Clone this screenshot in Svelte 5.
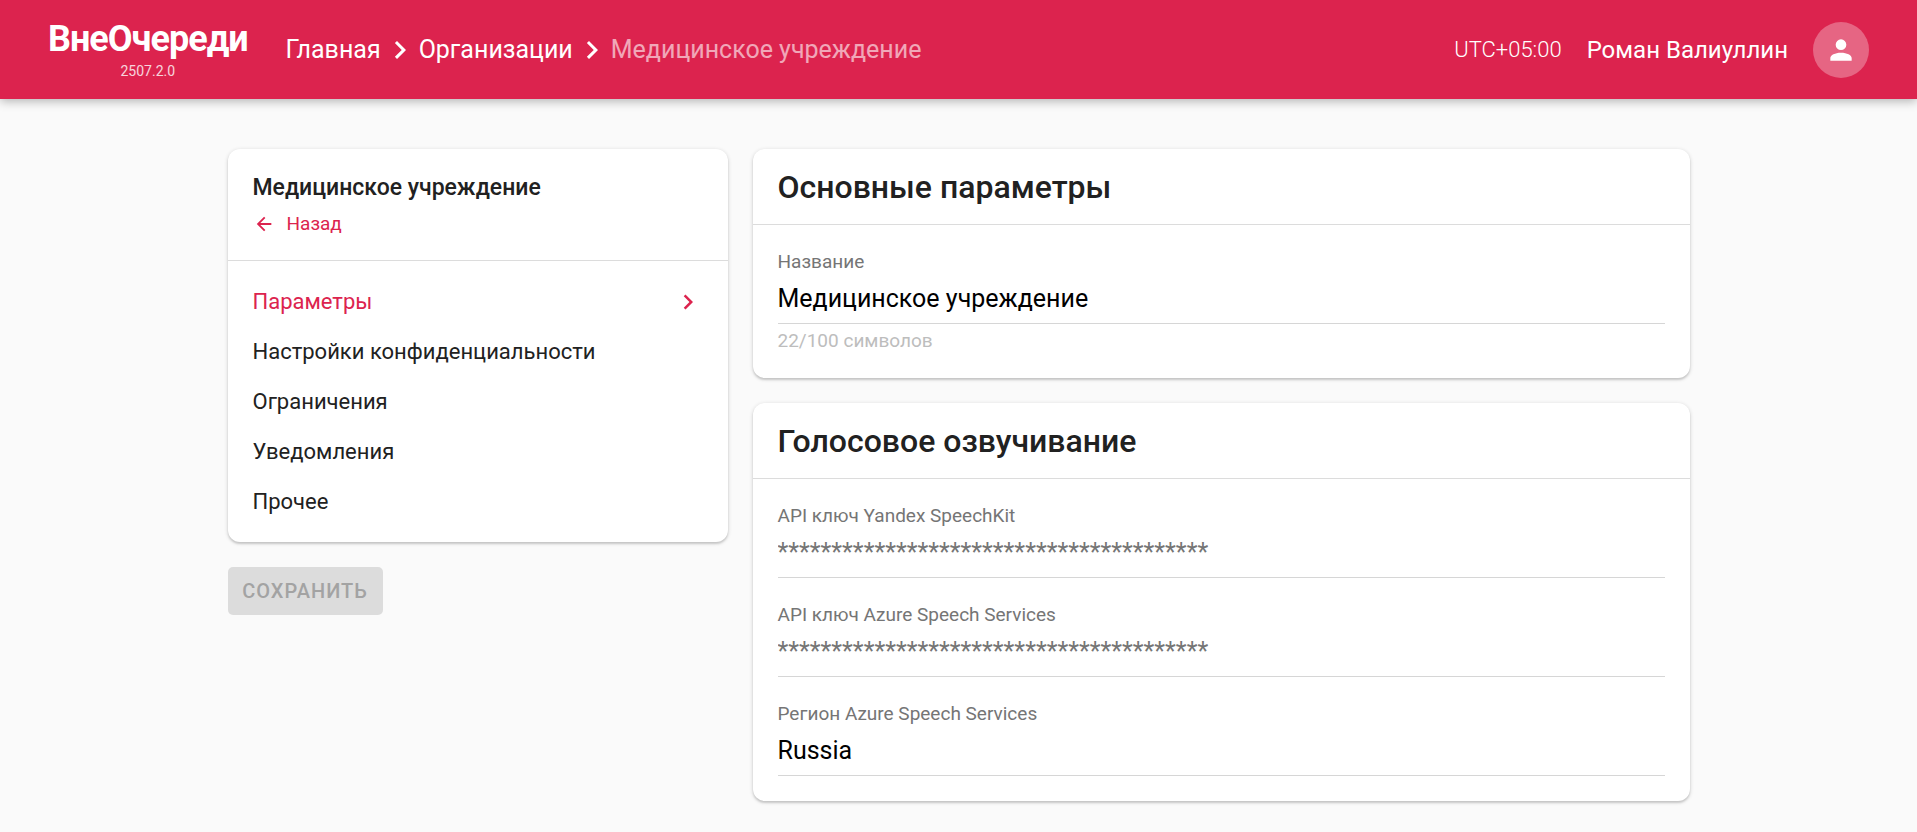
<script>
  let name = $state('Медицинское учреждение');
  let yandexKey = $state('');
  let azureKey = $state('');
  let region = $state('Russia');

  const mask = '*'.repeat(40);
  const sections = [
    'Параметры',
    'Настройки конфиденциальности',
    'Ограничения',
    'Уведомления',
    'Прочее'
  ];
  let active = $state(0);
</script>

{#snippet chevron(size)}
  <svg width={size} height={size} viewBox="0 0 24 24" aria-hidden="true">
    <path fill="currentColor" d="M8.59 16.58 13.17 12 8.59 7.41 10 6l6 6-6 6-1.41-1.42z" />
  </svg>
{/snippet}

<header class="bar">
  <a class="brand" href="#home">
    <span class="logo">ВнеОчереди</span>
    <span class="version">2507.2.0</span>
  </a>
  <nav class="crumbs" aria-label="Навигация">
    <a href="#home">Главная</a>
    {@render chevron(36)}
    <a href="#organizations">Организации</a>
    {@render chevron(36)}
    <span class="current">Медицинское учреждение</span>
  </nav>
  <div class="user">
    <span class="zone">UTC+05:00</span>
    <span class="person">Роман Валиуллин</span>
    <button class="avatar" type="button" aria-label="Профиль">
      <svg width="32" height="32" viewBox="0 0 24 24" aria-hidden="true">
        <path fill="currentColor" d="M12 4a4 4 0 1 1 0 8 4 4 0 0 1 0-8zm0 10c4.42 0 8 1.79 8 4v2H4v-2c0-2.21 3.58-4 8-4z" />
      </svg>
    </button>
  </div>
</header>

<main class="page">
  <aside class="side">
    <div class="card">
      <div class="side-head">
        <h1>Медицинское учреждение</h1>
        <a class="back" href="#organizations">
          <svg width="22" height="22" viewBox="0 0 24 24" aria-hidden="true">
            <path fill="currentColor" d="M20 11v2H8l5.5 5.5-1.42 1.42L4.16 12l7.92-7.92L13.5 5.5 8 11h12z" />
          </svg>
          Назад
        </a>
      </div>
      <nav class="menu" aria-label="Разделы">
        {#each sections as section, i}
          <a href="#section-{i}" class:active={i === active} onclick={() => (active = i)}>
            {section}
            {#if i === active}{@render chevron(30)}{/if}
          </a>
        {/each}
      </nav>
    </div>
    <button class="save" type="button" disabled>Сохранить</button>
  </aside>

  <form class="content">
    <section class="card">
      <h2>Основные параметры</h2>
      <div class="fields">
        <div>
          <div class="field">
            <label for="name">Название</label>
            <input id="name" type="text" maxlength="100" bind:value={name} />
          </div>
          <p class="hint">{name.length}/100 символов</p>
        </div>
      </div>
    </section>

    <section class="card">
      <h2>Голосовое озвучивание</h2>
      <div class="fields">
        <div class="field">
          <label for="yandex">API ключ Yandex SpeechKit</label>
          <input id="yandex" type="text" placeholder={mask} bind:value={yandexKey} />
        </div>
        <div class="field">
          <label for="azure">API ключ Azure Speech Services</label>
          <input id="azure" type="text" placeholder={mask} bind:value={azureKey} />
        </div>
        <div class="field">
          <label for="region">Регион Azure Speech Services</label>
          <input id="region" type="text" bind:value={region} />
        </div>
      </div>
    </section>
  </form>
</main>

<style>
  :global(body) {
    background: #fafafa;
    color: #212121;
    font-family: Roboto, 'Noto Sans', sans-serif;
  }

  h1,
  h2,
  p {
    margin: 0;
    font-weight: 500;
  }

  a {
    color: inherit;
    text-decoration: none;
  }

  svg {
    flex: none;
    display: block;
  }

  .bar {
    display: flex;
    align-items: center;
    min-height: 99px;
    box-sizing: border-box;
    padding: 0 48px;
    background: #dc234e;
    color: #fff;
    box-shadow: 0 2px 10px rgba(0, 0, 0, 0.3);
  }

  .brand {
    display: flex;
    flex-direction: column;
    align-items: center;
    margin-right: 38px;
  }

  .logo {
    font-size: 36px;
    line-height: 42px;
    font-weight: 700;
    letter-spacing: -1px;
  }

  .version {
    font-size: 14px;
    line-height: 22px;
    opacity: 0.8;
  }

  .crumbs {
    display: flex;
    align-items: center;
    gap: 1px;
    font-size: 25px;
    line-height: 32px;
  }

  .current {
    opacity: 0.6;
  }

  .user {
    display: flex;
    align-items: center;
    gap: 25px;
    margin-left: auto;
    line-height: 32px;
  }

  .zone {
    font-size: 22px;
    font-weight: 300;
  }

  .person {
    font-size: 24px;
  }

  .avatar {
    display: grid;
    place-items: center;
    width: 56px;
    height: 56px;
    padding: 0;
    border: 0;
    border-radius: 50%;
    background: rgba(255, 255, 255, 0.3);
    color: #fff;
  }

  .page {
    display: grid;
    grid-template-columns: minmax(0, 500px) minmax(0, 1fr);
    gap: 25px;
    align-items: start;
    max-width: 1462px;
    margin: 0 auto;
    padding: 50px 0 30px;
  }

  .side {
    display: flex;
    flex-direction: column;
    align-items: flex-start;
    gap: 25px;
  }

  .card {
    width: 100%;
    border-radius: 12px;
    background: #fff;
    box-shadow:
      0 1px 4px rgba(0, 0, 0, 0.16),
      0 2px 2px rgba(0, 0, 0, 0.12);
  }

  .side-head {
    display: flex;
    flex-direction: column;
    align-items: flex-start;
    gap: 8px;
    padding: 23px 25px 24px;
    border-bottom: 1px solid #dcdcdc;
  }

  h1 {
    font-size: 23px;
    line-height: 32px;
  }

  .back {
    display: flex;
    align-items: center;
    gap: 12px;
    color: #dc234e;
    font-size: 19px;
    line-height: 24px;
  }

  .menu {
    display: flex;
    flex-direction: column;
    padding: 16px 25px 15px;
  }

  .menu a {
    display: flex;
    align-items: center;
    justify-content: space-between;
    min-height: 50px;
    font-size: 22px;
    line-height: 30px;
  }

  .menu .active {
    color: #dc234e;
  }

  .save {
    min-width: 155px;
    height: 48px;
    padding: 0 14px;
    border: 0;
    border-radius: 5px;
    background: #dcdcdc;
    color: #a3a3a3;
    font: 500 20px Roboto, sans-serif;
    letter-spacing: 1px;
    text-transform: uppercase;
  }

  .content {
    display: flex;
    flex-direction: column;
    gap: 25px;
  }

  h2 {
    padding: 18px 25px 17px;
    border-bottom: 1px solid #dcdcdc;
    font-size: 32px;
    line-height: 40px;
  }

  .fields {
    display: flex;
    flex-direction: column;
    gap: 25px;
    padding: 25px;
  }

  .field {
    display: flex;
    flex-direction: column;
    border-bottom: 1px solid #d6d6d6;
  }

  label {
    color: #757575;
    font-size: 19px;
    line-height: 24px;
  }

  input {
    height: 49px;
    padding: 0;
    border: 0;
    outline: 0;
    background: none;
    color: #000;
    font: 400 25px Roboto, sans-serif;
  }

  input::placeholder {
    color: #757575;
    opacity: 1;
  }

  .hint {
    padding-top: 5px;
    color: #bdbdbd;
    font-size: 19px;
    font-weight: 400;
    line-height: 24px;
  }
</style>
